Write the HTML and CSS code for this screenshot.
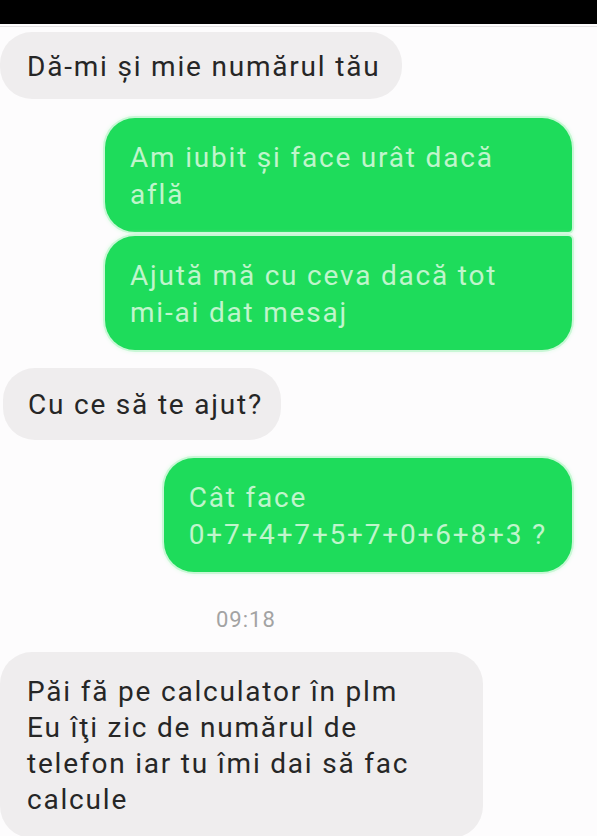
FILE: index.html
```html
<!DOCTYPE html>
<html lang="ro">
<head>
<meta charset="utf-8">
<title>Conversație</title>
<link rel="stylesheet" href="styles.css">
</head>
<body>
<div class="topbar"></div>
<div class="rule"></div>
<main class="chat">
  <div class="bubble gray b1">Dă-mi și mie numărul tău</div>
  <div class="group">
    <div class="bubble green g1">Am iubit și face urât dacă<br>află</div>
    <div class="bubble green g2">Ajută mă cu ceva dacă tot<br>mi-ai dat mesaj</div>
  </div>
  <div class="bubble gray b2">Cu ce să te ajut?</div>
  <div class="bubble green g3">Cât face<br>0+7+4+7+5+7+0+6+8+3 ?</div>
  <div class="time">09:18</div>
  <div class="bubble gray b3">Păi fă pe calculator în plm<br>Eu îţi zic de numărul de<br>telefon iar tu îmi dai să fac<br>calcule</div>
</main>
</body>
</html>
```

FILE: styles.css
```css
html, body {
  margin: 0;
  padding: 0;
}
body {
  width: 597px;
  height: 836px;
  overflow: hidden;
  background: #fdfcfd;
  font-family: Roboto, "Liberation Sans", sans-serif;
}
.topbar {
  height: 24px;
  background: #000;
}
.rule {
  height: 1px;
  margin-top: 2px;
  background: #e4e2e3;
}
.chat {
  display: flex;
  flex-direction: column;
  padding-top: 5px;
}
.bubble {
  box-sizing: border-box;
  white-space: nowrap;
  font-size: 28px;
  letter-spacing: 1.8px;
}
.gray {
  background: #efedee;
  color: #262626;
  line-height: 36px;
  border-radius: 32px;
  align-self: flex-start;
}
.green {
  background: #1edc5b;
  color: #c0f5cc;
  line-height: 37px;
  padding: 21px 25px 19px;
  border-radius: 30px;
  box-shadow: 0 0 0 2px #c9f7d6, 0 0 4px 2px #e2fbe9;
}
.b1 {
  padding: 17px 22px 14px 27px;
}
.group {
  align-self: flex-end;
  margin: 19px 25px 0 0;
  display: flex;
  flex-direction: column;
  gap: 4px;
}
.g1 {
  width: 467px;
  border-radius: 30px 30px 4px 30px;
}
.g2 {
  width: 467px;
  border-radius: 30px 4px 30px 30px;
}
.b2 {
  margin: 18px 0 0 3px;
  padding: 19px 18px 17px 25px;
}
.g3 {
  align-self: flex-end;
  margin: 18px 25px 0 0;
}
.time {
  align-self: flex-start;
  margin: 35px 0 0 216px;
  font-size: 22px;
  line-height: 26px;
  letter-spacing: 1px;
  color: #a3a3a3;
}
.b3 {
  width: 483px;
  margin-top: 19px;
  padding: 22px 20px 20px 27px;
}
```
